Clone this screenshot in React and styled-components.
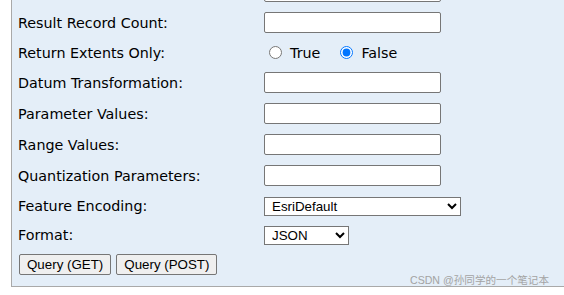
import React from "react";
import styled, { createGlobalStyle } from "styled-components";

const Global = createGlobalStyle`
  html, body { margin: 0; padding: 0; background: #ffffff; overflow: hidden; }
  body { font-family: "DejaVu Sans", Verdana, sans-serif; color: #000; }
`;

const Page = styled.div`
  position: relative;
  width: 564px;
  height: 295px;
  overflow: hidden;
`;

const Panel = styled.div`
  margin: -24px 0 0 11px;
  width: 620px;
  background: #e4eef8;
  border-left: 1px solid #a9a9a9;
  border-bottom: 1px solid #a9a9a9;
  padding: 0 0 6px 6px;
  display: flex;
  flex-direction: column;
`;

const Row = styled.div`
  display: grid;
  grid-template-columns: 246px 1fr;
  align-items: center;
  height: ${(p) => p.$h || 31}px;
`;

const Label = styled.div`
  font-size: 14.3px;
  white-space: nowrap;
  align-self: ${(p) => (p.$top ? "start" : "center")};
  line-height: ${(p) => (p.$top ? "14px" : "normal")};
`;

const TextInput = styled.input`
  box-sizing: border-box;
  width: 177px;
  height: 21px;
  margin: 0;
  border: 1px solid #767676;
  border-radius: 2px;
  background: #fff;
  font: 13.33px "Liberation Sans", Arial, sans-serif;
  padding: 1px 2px;
`;

const RadioGroup = styled.div`
  display: flex;
  align-items: center;
  gap: 20px;
  padding-left: 5px;
`;

const RadioOption = styled.label`
  display: inline-flex;
  align-items: center;
  gap: 8px;
  font-size: 14.3px;
`;

const Radio = styled.input`
  width: 13px;
  height: 13px;
  margin: 0;
`;

const Select = styled.select`
  box-sizing: border-box;
  width: ${(p) => p.$w}px;
  height: 19px;
  margin: 0;
  border: 1px solid #767676;
  border-radius: 0;
  background-color: #fff;
  color: #000;
  font: 13.33px "Liberation Sans", Arial, sans-serif;
  padding: 0 0 0 3px;
`;

const ButtonRow = styled.div`
  display: flex;
  align-items: center;
  gap: 5px;
  height: 31px;
  padding-left: 1px;
`;

const Button = styled.button`
  box-sizing: border-box;
  height: 21px;
  margin: 0;
  padding: 0 7px;
  border: 1px solid #767676;
  border-radius: 2px;
  background: #efefef;
  color: #000;
  font: 13.33px "Liberation Sans", Arial, sans-serif;
`;

const Watermark = styled.div`
  position: absolute;
  left: 410px;
  top: 274px;
  font: 10.6px/13px "Liberation Sans", Arial, "Noto Sans CJK SC", sans-serif;
  color: #a3a3a3;
  white-space: nowrap;
  pointer-events: none;
`;

const fields = [
  { label: "Result Offset:", type: "text", top: true },
  { label: "Result Record Count:", type: "text" },
  { label: "Return Extents Only:", type: "radio", h: 29 },
  { label: "Datum Transformation:", type: "text" },
  { label: "Parameter Values:", type: "text" },
  { label: "Range Values:", type: "text" },
  { label: "Quantization Parameters:", type: "text" },
  {
    label: "Feature Encoding:",
    type: "select",
    h: 29,
    w: 197,
    options: ["EsriDefault", "esriDefault"],
  },
  {
    label: "Format:",
    type: "select",
    h: 29,
    w: 85,
    options: ["JSON", "HTML", "GeoJSON", "PBF"],
  },
];

function Control({ f }) {
  if (f.type === "radio") {
    return (
      <RadioGroup>
        <RadioOption>
          <Radio type="radio" name="returnExtentsOnly" value="true" />
          True
        </RadioOption>
        <RadioOption>
          <Radio type="radio" name="returnExtentsOnly" value="false" defaultChecked />
          False
        </RadioOption>
      </RadioGroup>
    );
  }
  if (f.type === "select") {
    return (
      <div>
        <Select $w={f.w} defaultValue={f.options[0]}>
          {f.options.map((o) => (
            <option key={o} value={o}>
              {o}
            </option>
          ))}
        </Select>
      </div>
    );
  }
  return (
    <div>
      <TextInput type="text" />
    </div>
  );
}

export default function App() {
  return (
    <Page>
      <Global />
      <Panel>
        {fields.map((f) => (
          <Row key={f.label} $h={f.h}>
            <Label $top={f.top}>{f.label}</Label>
            <Control f={f} />
          </Row>
        ))}
        <ButtonRow>
          <Button type="button">Query (GET)</Button>
          <Button type="button">Query (POST)</Button>
        </ButtonRow>
      </Panel>
      <Watermark>CSDN @孙同学的一个笔记本</Watermark>
    </Page>
  );
}
